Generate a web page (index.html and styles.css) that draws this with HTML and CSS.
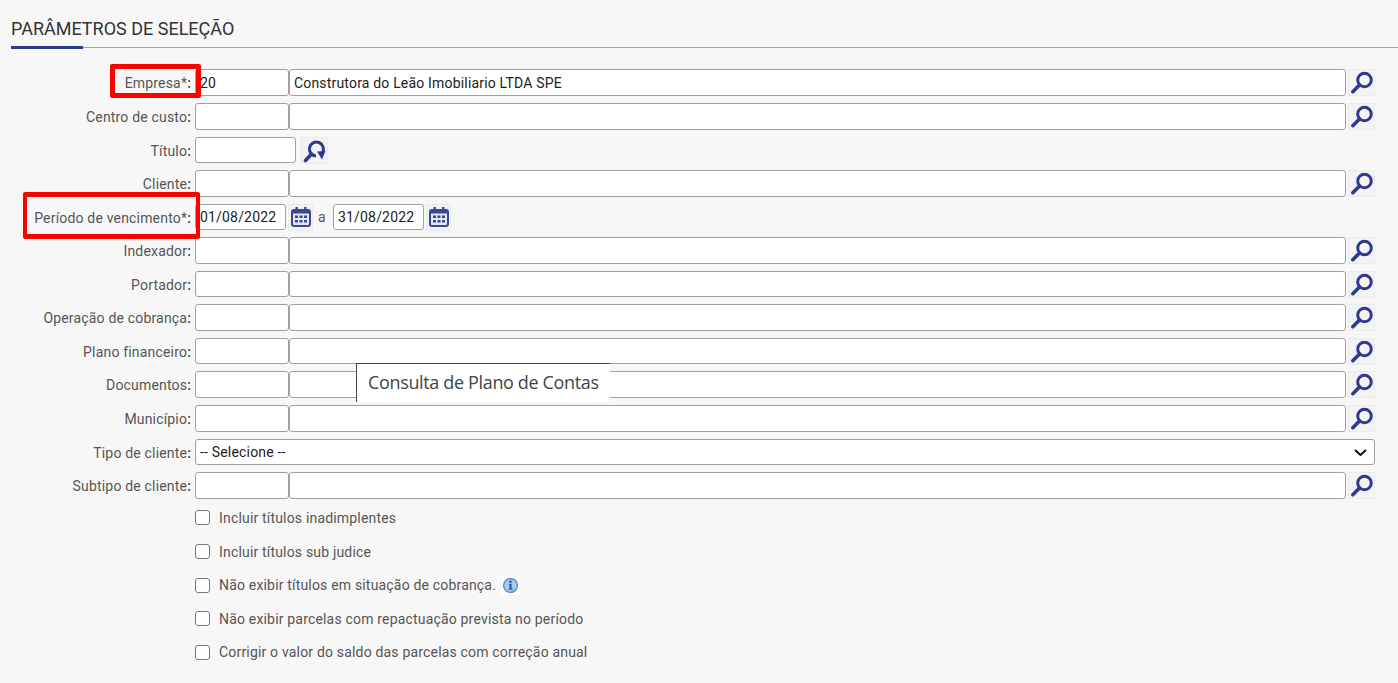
FILE: index.html
```html
<!DOCTYPE html>
<html>
<head>
    <title>Parâmetros de seleção</title>
    <link rel="stylesheet" href="styles.css">
</head>
<body>
    <svg class="icon-defs" width="0" height="0">
        <defs>
            <symbol id="lupa" viewBox="0 0 25 25">
                <circle cx="15.500" cy="10" r="6.800" fill="none" stroke="#2f3a8f" stroke-width="3"/>
                <path d="M10.500 15 L3.800 21.700" fill="none" stroke="#2f3a8f" stroke-width="3.600" stroke-linecap="round"/>
            </symbol>
            <symbol id="lupa-seta" viewBox="0 0 25 25">
                <path d="M20.500 14.500 A7 7 0 1 0 14 18" fill="none" stroke="#2f3a8f" stroke-width="3"/>
                <path d="M9.500 16 L3.500 22.500" fill="none" stroke="#2f3a8f" stroke-width="3.600" stroke-linecap="round"/>
                <path d="M15 13.500 L23.500 13 L20 21.500 Z" fill="#2f3a8f"/>
            </symbol>
            <symbol id="calendario" viewBox="0 0 23 25">
                <rect x="3" y="5" width="18" height="16" rx="2" fill="#e3e6f4" stroke="#3b4796" stroke-width="2"/>
                <rect x="3" y="5" width="18" height="3.500" fill="#3b4796"/>
                <rect x="6.500" y="2" width="2.400" height="4" fill="#3b4796"/>
                <rect x="15.100" y="2" width="2.400" height="4" fill="#3b4796"/>
                <path d="M6 10.500h3V13H6zM10.500 10.500h3V13h-3zM15 10.500h3V13h-3zM6 15h3v2.500H6zM10.500 15h3v2.500h-3zM15 15h3v2.500h-3z" fill="#3b4796"/>
            </symbol>
        </defs>
    </svg>

    <div class="page">
        <h1 class="section-title"><span>Parâmetros de seleção</span></h1>

        <form class="params">
            <div class="row">
                <label class="row-label">Empresa*<b>:</b></label>
                <div class="fields">
                    <input class="code" type="text" value="20">
                    <input class="name" type="text" value="Construtora do Leão Imobiliario LTDA SPE">
                    <button class="icon-btn" type="button"><svg><use href="#lupa"/></svg></button>
                </div>
            </div>
            <div class="row">
                <label class="row-label">Centro de custo<b>:</b></label>
                <div class="fields">
                    <input class="code" type="text">
                    <input class="name" type="text">
                    <button class="icon-btn" type="button"><svg><use href="#lupa"/></svg></button>
                </div>
            </div>
            <div class="row">
                <label class="row-label">Título<b>:</b></label>
                <div class="fields">
                    <input class="code-wide" type="text">
                    <button class="icon-btn icon-btn-gap" type="button"><svg><use href="#lupa-seta"/></svg></button>
                </div>
            </div>
            <div class="row">
                <label class="row-label">Cliente<b>:</b></label>
                <div class="fields">
                    <input class="code" type="text">
                    <input class="name" type="text">
                    <button class="icon-btn" type="button"><svg><use href="#lupa"/></svg></button>
                </div>
            </div>
            <div class="row">
                <label class="row-label">Período de vencimento*<b>:</b></label>
                <div class="fields">
                    <input class="date" type="text" value="01/08/2022">
                    <button class="icon-btn icon-btn-cal" type="button"><svg><use href="#calendario"/></svg></button>
                    <span class="date-sep">a</span>
                    <input class="date" type="text" value="31/08/2022">
                    <button class="icon-btn icon-btn-cal" type="button"><svg><use href="#calendario"/></svg></button>
                </div>
            </div>
            <div class="row">
                <label class="row-label">Indexador<b>:</b></label>
                <div class="fields">
                    <input class="code" type="text">
                    <input class="name" type="text">
                    <button class="icon-btn" type="button"><svg><use href="#lupa"/></svg></button>
                </div>
            </div>
            <div class="row">
                <label class="row-label">Portador<b>:</b></label>
                <div class="fields">
                    <input class="code" type="text">
                    <input class="name" type="text">
                    <button class="icon-btn" type="button"><svg><use href="#lupa"/></svg></button>
                </div>
            </div>
            <div class="row">
                <label class="row-label">Operação de cobrança<b>:</b></label>
                <div class="fields">
                    <input class="code" type="text">
                    <input class="name" type="text">
                    <button class="icon-btn" type="button"><svg><use href="#lupa"/></svg></button>
                </div>
            </div>
            <div class="row">
                <label class="row-label">Plano financeiro<b>:</b></label>
                <div class="fields">
                    <input class="code" type="text">
                    <input class="name" type="text">
                    <button class="icon-btn" type="button"><svg><use href="#lupa"/></svg></button>
                </div>
            </div>
            <div class="row">
                <label class="row-label">Documentos<b>:</b></label>
                <div class="fields">
                    <input class="code" type="text">
                    <input class="name" type="text">
                    <button class="icon-btn" type="button"><svg><use href="#lupa"/></svg></button>
                </div>
            </div>
            <div class="row">
                <label class="row-label">Município<b>:</b></label>
                <div class="fields">
                    <input class="code" type="text">
                    <input class="name" type="text">
                    <button class="icon-btn" type="button"><svg><use href="#lupa"/></svg></button>
                </div>
            </div>
            <div class="row">
                <label class="row-label">Tipo de cliente<b>:</b></label>
                <div class="fields select-wrap">
                    <select class="select">
                        <option>-- Selecione --</option>
                    </select>
                    <svg class="chevron" viewBox="0 0 13 7"><path d="M1 1 L6.500 6 L12 1" fill="none" stroke="#111" stroke-width="2"/></svg>
                </div>
            </div>
            <div class="row">
                <label class="row-label">Subtipo de cliente<b>:</b></label>
                <div class="fields">
                    <input class="code" type="text">
                    <input class="name" type="text">
                    <button class="icon-btn" type="button"><svg><use href="#lupa"/></svg></button>
                </div>
            </div>

            <div class="checks">
                <label class="check"><input type="checkbox"><span>Incluir títulos inadimplentes</span></label>
                <label class="check"><input type="checkbox"><span>Incluir títulos sub judice</span></label>
                <label class="check">
                    <input type="checkbox"><span>Não exibir títulos em situação de cobrança.</span>
                    <svg class="info" viewBox="0 0 20 20">
                        <rect width="20" height="20" fill="#fff"/>
                        <circle cx="10" cy="10" r="7.300" fill="#a9c8ea" stroke="#5f93d1" stroke-width="1.600"/>
                        <circle cx="10" cy="6.200" r="1.400" fill="#2a5f9e"/>
                        <path d="M8.300 8.500h2.900v4.700h1v1.300H8v-1.300h1V9.800h-.7z" fill="#2a5f9e"/>
                    </svg>
                </label>
                <label class="check"><input type="checkbox"><span>Não exibir parcelas com repactuação prevista no período</span></label>
                <label class="check"><input type="checkbox"><span>Corrigir o valor do saldo das parcelas com correção anual</span></label>
            </div>
        </form>

        <!-- destaques em vermelho e tooltip -->
        <div class="mark mark-empresa"></div>
        <div class="mark mark-periodo"></div>
        <div class="tooltip">Consulta de Plano de Contas</div>
    </div>
</body>
</html>
```

FILE: styles.css
```css
* {
    box-sizing: border-box;
}

html, body {
    margin: 0;
    height: 100%;
    overflow: hidden;
}

body {
    background: #f7f7f7;
    font-family: Roboto, "Liberation Sans", sans-serif;
    font-size: 14px;
    letter-spacing: 0.18px;
    color: #555;
}

.icon-defs {
    display: block;
    height: 0;
}

.page {
    position: relative;
    height: 683px;
}

.section-title {
    margin: 0 0 21.4px 11px;
    height: 48px;
    padding-top: 18px;
    border-bottom: 1px solid #a3a3a3;
    font-size: 18px;
    font-weight: 400;
    line-height: 21px;
    letter-spacing: 0;
    color: #333;
    text-transform: uppercase;
}

.section-title span {
    display: block;
    position: relative;
    height: 29px;
}

.section-title span::after {
    content: "";
    position: absolute;
    left: 0;
    bottom: -2px;
    width: 72px;
    height: 3px;
    background: #2f3a8f;
}

.row {
    display: grid;
    grid-template-columns: 191px 1fr;
    column-gap: 4px;
    height: 33.57px;
    padding-right: 23px;
}

.row-label {
    height: 27px;
    line-height: 28px;
    text-align: right;
    white-space: nowrap;
}

.row-label b {
    font-weight: 500;
    color: #444;
}

.fields {
    display: flex;
    align-items: flex-start;
}

input[type="text"],
.select {
    height: 26.6px;
    border: 1px solid #a0a0a0;
    border-radius: 3px;
    background-color: #fff;
    font-family: Roboto, "Liberation Sans", sans-serif;
    font-size: 14px;
    letter-spacing: 0.18px;
    color: #222;
    padding: 0 4px;
    outline: none;
}

.code {
    width: 94px;
}

.code-wide {
    width: 101px;
}

.name {
    flex: 1;
    min-width: 0;
}

.date {
    width: 91px;
}

.select-wrap {
    position: relative;
}

.select {
    appearance: none;
    width: 100%;
}

.chevron {
    position: absolute;
    right: 8px;
    top: 10px;
    width: 13px;
    height: 7px;
}

.icon-btn {
    flex: none;
    width: 27px;
    height: 27px;
    margin-left: 2px;
    padding: 0;
    border: 1px solid #ebebeb;
    background: #f3f3f3;
}

.icon-btn svg {
    display: block;
    width: 25px;
    height: 25px;
}

.icon-btn-gap {
    margin-left: 5px;
}

.icon-btn-cal {
    width: 25px;
}

.icon-btn-cal svg {
    width: 23px;
}

.date-sep {
    width: 20px;
    padding-left: 5px;
    line-height: 27px;
}

.checks {
    margin-top: -4.5px;
    padding-left: 195px;
}

.check {
    display: flex;
    align-items: center;
    height: 33.57px;
}

.check input {
    appearance: none;
    flex: none;
    width: 15px;
    height: 15px;
    margin: 0 9px 0 0;
    border: 1.5px solid #777;
    border-radius: 3px;
    background: #fff;
}

.info {
    width: 19px;
    height: 19px;
    margin-left: 5px;
}

.mark {
    position: absolute;
    border: 5px solid #f00;
    border-radius: 2px;
}

.mark-empresa {
    left: 110px;
    top: 64px;
    width: 91px;
    height: 34px;
}

.mark-periodo {
    left: 23px;
    top: 192px;
    width: 177px;
    height: 47px;
    border-width: 5px 4px;
}

.tooltip {
    position: absolute;
    left: 356px;
    top: 363px;
    width: 254px;
    height: 39px;
    padding-left: 11px;
    border-top: 1px solid #444;
    border-left: 1px solid #444;
    background: #fff;
    font-family: "Open Sans", sans-serif;
    font-size: 18px;
    letter-spacing: -0.35px;
    line-height: 37px;
    color: #444;
}
```
